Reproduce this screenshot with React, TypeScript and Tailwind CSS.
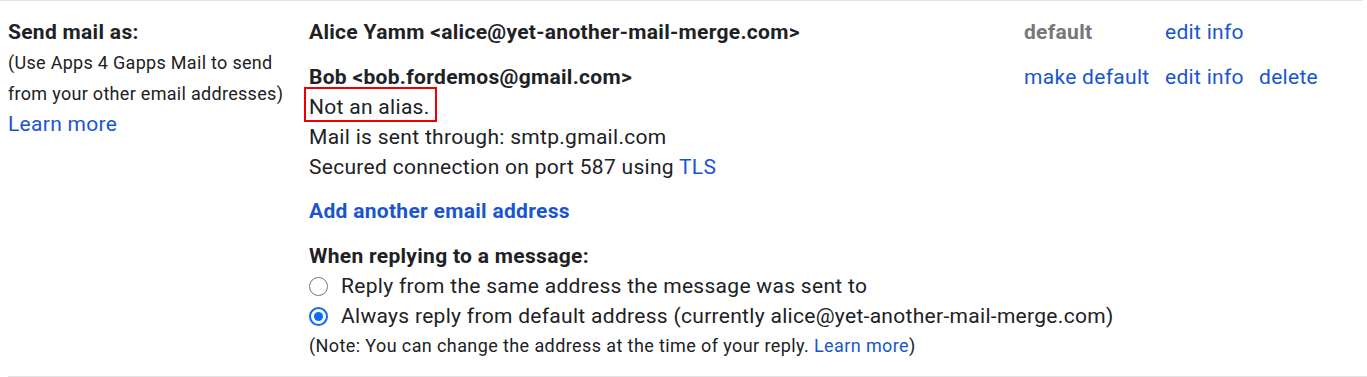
const link = "text-[#1a55d0]";

function Radio({ checked }: { checked?: boolean }) {
  return checked ? (
    <span className="flex h-[19px] w-[19px] shrink-0 items-center justify-center rounded-full border-2 border-[#0b6cf0]">
      <span className="h-[9px] w-[9px] rounded-full bg-[#0b6cf0]" />
    </span>
  ) : (
    <span className="h-[19px] w-[19px] shrink-0 rounded-full border-[1.5px] border-[#767676]" />
  );
}

function AccountRow({
  name,
  status,
  canDelete,
  children,
}: {
  name: string;
  status: "default" | "make";
  canDelete?: boolean;
  children?: React.ReactNode;
}) {
  return (
    <div className="flex">
      <div className="flex-1">
        <p className="font-bold">{name}</p>
        {children}
      </div>
      <div className="w-[141px]">
        {status === "default" ? (
          <span className="font-bold text-[#777777]">default</span>
        ) : (
          <a className={link}>make default</a>
        )}
      </div>
      <div className="w-[94px]">
        <a className={link}>edit info</a>
      </div>
      <div className="w-[104px]">{canDelete && <a className={link}>delete</a>}</div>
    </div>
  );
}

export default function App() {
  return (
    <div className="w-[1363px] bg-white font-['Roboto',sans-serif] tracking-[0.3px] text-[#202124]">
      <div className="flex border-t border-[#e3e3e3]">
        <div className="w-[309px] shrink-0 pl-2 pt-4">
          <p className="text-[21px] font-bold leading-[30px]">Send mail as:</p>
          <p className="text-[18px] leading-[31px]">
            (Use Apps 4 Gapps Mail to send from your other email addresses)
          </p>
          <a className={`${link} text-[21px] leading-[31px]`}>Learn more</a>
        </div>

        <div className="flex-1 pt-4 text-[21px] leading-[30px]">
          <div className="flex flex-col gap-[15px]">
            <AccountRow name="Alice Yamm <alice@yet-another-mail-merge.com>" status="default" />
            <AccountRow name="Bob <bob.fordemos@gmail.com>" status="make" canDelete>
              <p>
                <span className="relative inline-block">
                  Not an alias.
                  <span className="absolute -top-[5px] bottom-0 -left-[5px] -right-[7px] border-2 border-[#ee0000]" />
                </span>
              </p>
              <p>Mail is sent through: smtp.gmail.com</p>
              <p>
                Secured connection on port 587 using <a className={link}>TLS</a>
              </p>
            </AccountRow>
          </div>

          <a className={`${link} mt-[14px] block font-bold`}>Add another email address</a>

          <div className="mt-[15px] pb-[15px]">
            <p className="font-bold">When replying to a message:</p>
            <label className="flex items-center gap-[13px]">
              <Radio />
              <span>Reply from the same address the message was sent to</span>
            </label>
            <label className="flex items-center gap-[13px]">
              <Radio checked />
              <span>Always reply from default address (currently alice@yet-another-mail-merge.com)</span>
            </label>
            <p className="text-[18px] tracking-[0.4px]">
              (Note: You can change the address at the time of your reply. <a className={link}>Learn more</a>)
            </p>
          </div>
        </div>
      </div>
      <div className="ml-2 w-[1359px] border-b border-[#e3e3e3]" />
    </div>
  );
}
